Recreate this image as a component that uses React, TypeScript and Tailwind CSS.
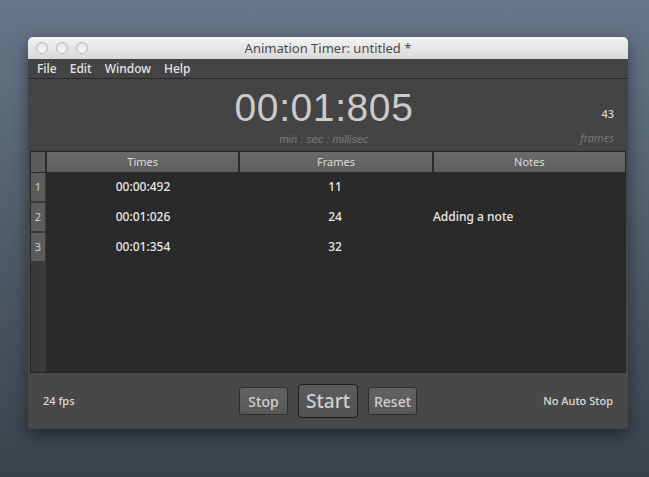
import React from "react";

const rows = [
  { n: 1, time: "00:00:492", frames: "11", note: "" },
  { n: 2, time: "00:01:026", frames: "24", note: "Adding a note" },
  { n: 3, time: "00:01:354", frames: "32", note: "" },
];

const font = { fontFamily: '"Noto Sans", "Open Sans", sans-serif' };
const readoutFont = { fontFamily: '"Liberation Sans", Arial, sans-serif' };

function TrafficLights() {
  return (
    <div className="absolute left-[8px] top-[5px] flex gap-[8px]">
      {[0, 1, 2].map((i) => (
        <span
          key={i}
          className="block h-[12px] w-[12px] rounded-full border border-[#b4b4b4] bg-gradient-to-b from-[#e6e6e6] to-[#f6f6f6]"
        />
      ))}
    </div>
  );
}

function Button({ label, big }: { label: string; big?: boolean }) {
  if (big) {
    return (
      <button className="flex h-[34px] w-[60px] items-center justify-center rounded-[4px] border border-[#1c1c1c] bg-gradient-to-b from-[#5c5c5c] to-[#525252] text-[19px] font-medium text-[#d0d0d0]">
        {label}
      </button>
    );
  }
  return (
    <button className="flex h-[28px] w-[49px] items-center justify-center rounded-[3px] border border-[#2e2e2e] bg-gradient-to-b from-[#626262] to-[#585858] text-[14px] font-medium text-[#cfcfcf]">
      {label}
    </button>
  );
}

export default function App() {
  return (
    <div
      style={font}
      className="h-[477px] w-[649px] overflow-hidden bg-gradient-to-b from-[#66778a] to-[#3a424b] pl-[28px] pt-[37px]"
    >
      <div className="flex h-[392px] w-[600px] flex-col overflow-hidden rounded-t-[5px] rounded-b-[4px] bg-[#474747] shadow-[0_6px_16px_rgba(0,0,0,0.45)]">
        {/* title bar */}
        <div className="relative flex h-[22px] items-center justify-center bg-gradient-to-b from-[#f4f4f4] to-[#d9d9d9] text-[13px] text-[#4a4a4a]">
          <TrafficLights />
          <span className="leading-none">Animation Timer: untitled *</span>
        </div>

        {/* menu */}
        <div className="flex h-[20px] items-center gap-[13px] border-b border-[#2a2a2a] bg-[#444444] pl-[9px] text-[12px] font-medium text-[#e4e4e4]">
          <span>File</span>
          <span>Edit</span>
          <span>Window</span>
          <span>Help</span>
        </div>

        {/* timer readout */}
        <div className="flex h-[72px] bg-[#444444]">
          <div className="w-[70px]" />
          <div style={readoutFont} className="flex flex-1 flex-col items-center pr-[8px]">
            <div className="mt-[12px] text-[39px] leading-[34px] tracking-[0.6px] text-[#cbcbcb]">00:01:805</div>
            <div className="mt-[7px] text-[11px] leading-[15px] italic text-[#7a7a7a]">min : sec : millisec</div>
          </div>
          <div className="flex w-[70px] flex-col items-end pr-[14px]">
            <div className="mt-[27px] text-[11px] font-medium text-[#d8d8d8]">43</div>
            <div className="mt-[7px] text-[11px] italic text-[#7a7a7a]">frames</div>
          </div>
        </div>

        {/* table */}
        <div className="mx-[2px] flex h-[222px] flex-col border border-[#262626] bg-[#2a2a2a]">
          <div className="flex h-[21px] gap-[2px] bg-[#2a2a2a] pb-[1px]">
            <div className="w-[14px] bg-[#5c5c5c]" />
            {["Times", "Frames", "Notes"].map((h) => (
              <div
                key={h}
                className="flex flex-1 items-center justify-center bg-gradient-to-b from-[#6a6a6a] to-[#5e5e5e] text-[11px] text-[#dcdcdc]"
              >
                {h}
              </div>
            ))}
          </div>
          <div className="flex flex-1">
            <div className="flex w-[15px] flex-col gap-[2px] bg-[#3a3a3a] pr-[1px]">
              {rows.map((r) => (
                <div
                  key={r.n}
                  className="flex h-[28px] items-center justify-center bg-[#5c5c5c] text-[11px] text-[#d0d0d0]"
                >
                  {r.n}
                </div>
              ))}
            </div>
            <div className="flex flex-1 flex-col gap-[2px] pl-[1px]">
              {rows.map((r) => (
                <div key={r.n} className="flex h-[28px] items-center text-[12px] font-medium text-[#e8e8e8]">
                  <div className="flex-1 text-center">{r.time}</div>
                  <div className="flex-1 text-center">{r.frames}</div>
                  <div className="flex-1 pl-[2px]">{r.note}</div>
                </div>
              ))}
            </div>
          </div>
        </div>

        {/* bottom controls */}
        <div className="grid flex-1 grid-cols-[1fr_auto_1fr] items-center bg-[#484848] px-[15px] text-[11px] text-[#dcdcdc]">
          <span className="font-medium">24 fps</span>
          <div className="flex items-center gap-[10px]">
            <Button label="Stop" />
            <Button label="Start" big />
            <Button label="Reset" />
          </div>
          <span className="justify-self-end font-medium">No Auto Stop</span>
        </div>
      </div>
    </div>
  );
}
